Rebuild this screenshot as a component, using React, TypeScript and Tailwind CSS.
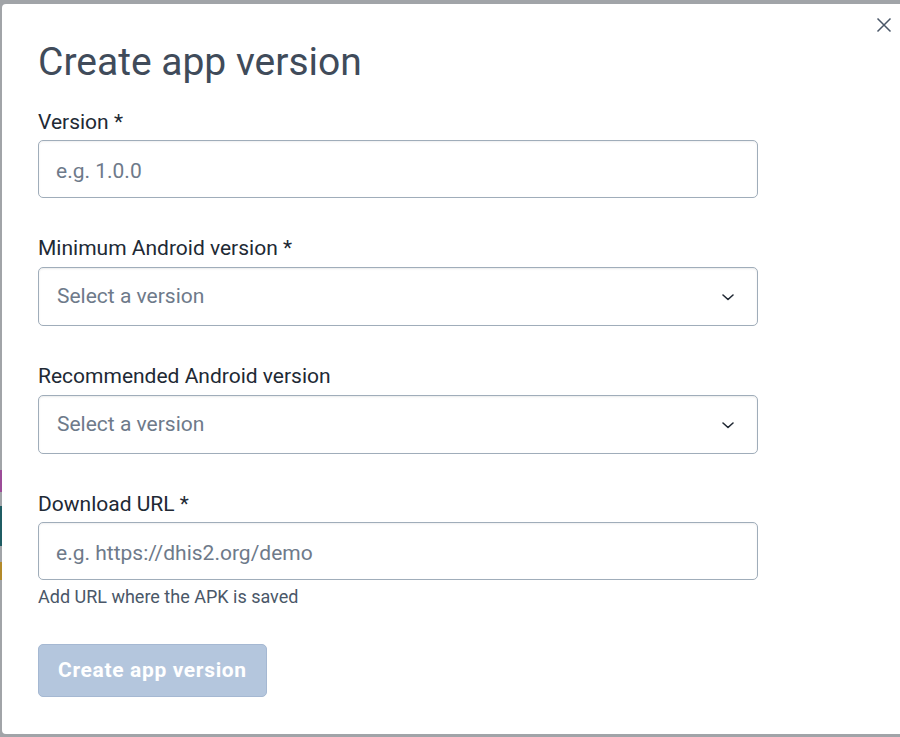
import React from 'react';

const font = { fontFamily: 'Roboto, "Noto Sans", sans-serif' };

function Chevron() {
  return (
    <svg width="16" height="16" viewBox="0 0 16 16" fill="none" className="text-[#212934]">
      <path d="M3 6l5 4.5L13 6" stroke="currentColor" strokeWidth="1.6" strokeLinecap="round" strokeLinejoin="round" />
    </svg>
  );
}

function Label({ children }: { children: React.ReactNode }) {
  return <div className="h-[24px] leading-[24px] text-[21px] text-[#212934]">{children}</div>;
}

function TextField({ label, placeholder }: { label: string; placeholder: string }) {
  return (
    <div className="flex flex-col">
      <Label>{label}</Label>
      <input
        type="text"
        placeholder={placeholder}
        className="mt-[6px] h-[58px] w-[720px] rounded-[5px] border border-[#a0adba] bg-white px-[17px] pt-[3px] text-[21px] text-[#212934] placeholder:text-[#6e7a8a] shadow-[inset_0_1px_2px_0_rgba(48,54,60,0.08)] outline-none"
      />
    </div>
  );
}

function SelectField({ label }: { label: string }) {
  return (
    <div className="flex flex-col">
      <Label>{label}</Label>
      <div className="mt-[7px] flex h-[59px] w-[720px] items-center justify-between rounded-[5px] border border-[#a0adba] bg-white pl-[18px] pr-[21px] pt-[1px] shadow-[inset_0_1px_2px_0_rgba(48,54,60,0.1)]">
        <span className="text-[21px] text-[#6e7a8a]">Select a version</span>
        <Chevron />
      </div>
    </div>
  );
}

export default function App() {
  return (
    <div className="relative flex h-[737px] w-[900px] bg-[#a1a4a8] pb-[3px] pl-[2px] pt-[4px]" style={font}>
      {/* background app peeking through at the left edge */}
      <div className="absolute left-0 top-[470px] h-[22px] w-[2px] bg-[#9c4c98]" />
      <div className="absolute left-0 top-[506px] h-[40px] w-[2px] bg-[#1f5c63]" />
      <div className="absolute left-0 top-[562px] h-[18px] w-[2px] bg-[#b38a2a]" />

      <div className="relative flex flex-1 flex-col rounded-l-[4px] bg-white pl-[36px] pt-[36px]">
        <button className="absolute right-[6px] top-[11px] text-[#4a5768]" aria-label="Close">
          <svg width="20" height="20" viewBox="0 0 20 20" fill="none">
            <path d="M3.5 3.5l13 13M16.5 3.5l-13 13" stroke="currentColor" strokeWidth="1.5" />
          </svg>
        </button>

        <h1 className="h-[44px] leading-[44px] text-[39px] font-normal text-[#404b5a]">Create app version</h1>

        <div className="mt-[26px] flex flex-col gap-[38px]">
          <TextField label="Version *" placeholder="e.g. 1.0.0" />
          <SelectField label="Minimum Android version *" />
          <SelectField label="Recommended Android version" />
          <div className="flex flex-col">
            <TextField label="Download URL *" placeholder="e.g. https://dhis2.org/demo" />
            <div className="mt-[7px] h-[20px] leading-[20px] text-[18px] text-[#4a5768]">Add URL where the APK is saved</div>
          </div>
        </div>

        <div className="mt-[37px]">
          <button
            disabled
            className="flex h-[53px] items-center rounded-[5px] border border-[#a5b8d2] bg-[#b4c6dd] px-[19px] pt-[1px] text-[21px] font-bold tracking-[0.65px] text-white"
          >
            Create app version
          </button>
        </div>
      </div>
    </div>
  );
}
